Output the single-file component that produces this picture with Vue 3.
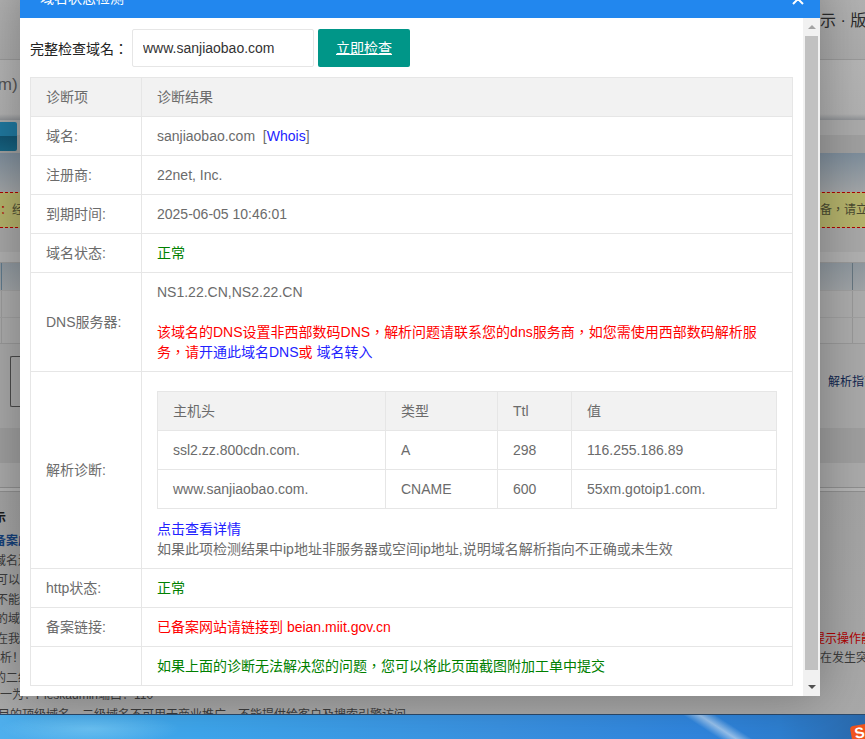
<script setup>
// 背景页面底部的说明文字（被弹窗挡住，只露出两侧）
const noticeRows = [
  { left: '示', cls: 'dark-bold cut', right: '' },
  { left: '备案成功', cls: 'blue-bold cut', right: '' },
  { left: '域名还未', cls: 'cut', right: '' },
  { left: '可以进行', cls: 'trim', right: '' },
  { left: '不能访问', cls: 'trim', right: '' },
  { left: '的域名', cls: 'trim', right: '' },
  { left: '在我司', cls: 'trim', right: '提示操作能', rightCls: 'red-dark cut-more' },
  { left: '析！', cls: '', right: '在发生突' },
  { left: '的二级', cls: 'cut', right: '' }
]

const hostRows = [
  { host: 'ssl2.zz.800cdn.com.', type: 'A', ttl: '298', value: '116.255.186.89' },
  { host: 'www.sanjiaobao.com.', type: 'CNAME', ttl: '600', value: '55xm.gotoip1.com.' }
]
</script>

<template>
  <div class="page">
    <!-- 背景页面 -->
    <div class="band band-top">
      <div></div>
      <div></div>
      <div class="side dark-title">示 · 版权</div>
    </div>
    <div class="band band-nav">
      <div class="side nav-text">tm)</div>
    </div>
    <div class="band band-tabs">
      <div class="tab-btn"></div>
    </div>
    <div class="band band-fade"></div>
    <div class="band band-warn">
      <div class="side warn-text"><span class="red-dark">：</span>经</div>
      <div></div>
      <div class="side warn-text">备<span class="p">，</span>请立即</div>
    </div>
    <div class="band band-gap"></div>
    <div class="band band-thead">
      <div class="edge-line"></div>
      <div></div>
      <div class="cell-line"></div>
    </div>
    <div class="band band-tr">
      <div class="edge-line"></div>
      <div></div>
      <div class="cell-line"></div>
    </div>
    <div class="band band-tr band-tr-last">
      <div class="edge-line"></div>
      <div></div>
      <div class="cell-line"></div>
    </div>
    <div class="band band-box">
      <div class="box-wrap"><div class="box"></div></div>
      <div></div>
      <div class="side guide">解析指南</div>
    </div>
    <div class="band band-shade"></div>
    <div class="band band-light"></div>
    <div class="band band-double"></div>
    <div class="notice">
      <div v-for="row in noticeRows" :key="row.left" class="band notice-row">
        <div class="side" :class="row.cls">{{ row.left }}</div>
        <div></div>
        <div class="side" :class="row.rightCls">{{ row.right }}</div>
      </div>
      <div class="long-row">一为：Pleskadmin端口：110</div>
      <div class="long-row last-line">目的顶级域名，二级域名不可用于商业推广，不能提供给客户及搜索引擎访问</div>
    </div>
    <div class="taskbar">
      <span class="sogou">S</span>
    </div>

    <!-- 弹窗 -->
    <div class="modal">
      <div class="modal-title">
        <span>域名状态检测</span>
        <svg class="close" viewBox="0 0 12 12" width="12" height="12">
          <path d="M1 1L11 11M11 1L1 11" stroke="#fff" stroke-width="2" fill="none" />
        </svg>
      </div>
      <div class="modal-body">
        <div class="content">
          <div class="check-form">
            <label class="form-label">完整检查域名：</label>
            <input class="domain-input" value="www.sanjiaobao.com" readonly />
            <a class="check-btn">立即检查</a>
          </div>
          <table class="diag">
            <colgroup>
              <col class="col-name" />
              <col />
            </colgroup>
            <thead>
              <tr>
                <th>诊断项</th>
                <th>诊断结果</th>
              </tr>
            </thead>
            <tbody>
              <tr>
                <td>域名:</td>
                <td>sanjiaobao.com&nbsp;&nbsp;[<a class="link">Whois</a>]</td>
              </tr>
              <tr>
                <td>注册商:</td>
                <td>22net, Inc.</td>
              </tr>
              <tr>
                <td>到期时间:</td>
                <td>2025-06-05 10:46:01</td>
              </tr>
              <tr>
                <td>域名状态:</td>
                <td class="green">正常</td>
              </tr>
              <tr>
                <td>DNS服务器:</td>
                <td>
                  NS1.22.CN,NS2.22.CN<br /><br />
                  <span class="red">该域名的DNS设置非西部数码DNS<span class="p">，</span>解析问题请联系您的dns服务商<span class="p">，</span>如您需使用西部数码解析服务<span class="p">，</span>请<a class="link">开通此域名DNS</a>或 <a class="link">域名转入</a></span>
                </td>
              </tr>
              <tr>
                <td>解析诊断:</td>
                <td>
                  <table class="hosts">
                    <colgroup>
                      <col class="col-host" />
                      <col class="col-type" />
                      <col class="col-ttl" />
                      <col />
                    </colgroup>
                    <thead>
                      <tr>
                        <th>主机头</th>
                        <th>类型</th>
                        <th>Ttl</th>
                        <th>值</th>
                      </tr>
                    </thead>
                    <tbody>
                      <tr v-for="item in hostRows" :key="item.host">
                        <td>{{ item.host }}</td>
                        <td>{{ item.type }}</td>
                        <td>{{ item.ttl }}</td>
                        <td>{{ item.value }}</td>
                      </tr>
                    </tbody>
                  </table>
                  <a class="link">点击查看详情</a><br />
                  如果此项检测结果中ip地址非服务器或空间ip地址,说明域名解析指向不正确或未生效
                </td>
              </tr>
              <tr>
                <td>http状态:</td>
                <td class="green">正常</td>
              </tr>
              <tr>
                <td>备案链接:</td>
                <td class="red">已备案网站请链接到 beian.miit.gov.cn</td>
              </tr>
              <tr>
                <td></td>
                <td class="green">如果上面的诊断无法解决您的问题<span class="p">，</span>您可以将此页面截图附加工单中提交</td>
              </tr>
            </tbody>
          </table>
        </div>
        <div class="scrollbar">
          <div class="arrow-btn"><i class="arrow-up"></i></div>
          <div class="thumb"></div>
          <div class="arrow-btn arrow-btn-end"><i class="arrow-down"></i></div>
        </div>
      </div>
    </div>
  </div>
</template>

<style scoped>
.page {
  position: relative;
  width: 865px;
  height: 739px;
  overflow: hidden;
  display: flex;
  flex-direction: column;
  background: #adadad;
  font-family: "Liberation Sans", "Noto Sans CJK SC", sans-serif;
  font-size: 12px;
  color: #3c3c3c;
}

.band {
  display: grid;
  grid-template-columns: 20px 800px 45px;
  flex: none;
}

.side {
  overflow: hidden;
  white-space: nowrap;
}

/* 中文逗号、冒号居中的字形 */
.p,
.form-label {
  font-family: "Liberation Sans", "Noto Sans CJK TC", sans-serif;
}

.band-top {
  height: 59px;
  background: linear-gradient(#b2b2b2, #ababab);
}

.dark-title {
  font-size: 16px;
  line-height: 42px;
  color: #2a2a2a;
}

.band-nav {
  height: 61px;
  border-top: 1px solid #9a9a9a;
  box-sizing: border-box;
  background: linear-gradient(#b5b5b5 0, #b1b1b1 90%, #8f9296 100%);
}

.nav-text {
  margin-top: 15px;
  font-size: 17px;
  line-height: 20px;
  color: #555;
  text-indent: -7px;
}

.band-tabs {
  height: 33px;
  background: linear-gradient(#ababab 0, #ababab 45%, #a0a0a0 45%, #a0a0a0 100%);
}

.tab-btn {
  width: 17px;
  height: 29px;
  margin-top: 2px;
  border-radius: 0 2px 2px 0;
  background: linear-gradient(#20789f 0, #20789f 50%, #125573 50%, #176583 100%);
}

.band-fade {
  height: 39px;
  background: linear-gradient(#7e8e9c, #a3a6a8);
}

.band-warn {
  height: 36px;
  box-sizing: border-box;
  border-top: 1px dashed #b00000;
  border-bottom: 1px dashed #b00000;
  background: #b5b36c;
}

.warn-text {
  font-size: 12px;
  line-height: 34px;
  color: #4a4a30;
}

.red-dark {
  color: #b00000;
}

.band-gap {
  height: 34px;
  background: linear-gradient(#a8a8a8 0, #a8a8a8 70%, #b0b0b0 70%, #b0b0b0 100%);
}

.band-thead {
  height: 28px;
  border-top: 1px solid #999;
  box-sizing: border-box;
  background: linear-gradient(#8f989f, #a0a4a7);
}

.band-tr {
  height: 27px;
  border-top: 1px solid #a0a0a0;
  box-sizing: border-box;
  background: #acacac;
}

.band-tr-last {
  height: 27px;
  border-bottom: 1px solid #999;
}

.edge-line {
  width: 1px;
  margin-left: 1px;
  background: #9c9c9c;
}

.cell-line {
  width: 1px;
  margin-left: 32px;
  background: #989898;
}

.band-thead .edge-line {
  background: #5f7a8c;
}

.band-thead .cell-line {
  background: #66757f;
}

.band-box {
  height: 84px;
  background: #a9a9a9;
}

.box-wrap {
  padding: 12px 0 0 10px;
}

.box {
  height: 51px;
  box-sizing: border-box;
  border: 1px solid #4a4a4a;
  border-right: none;
  border-radius: 2px 0 0 2px;
}

.guide {
  padding-left: 8px;
  padding-top: 30px;
  line-height: 16px;
  color: #10264f;
}

.band-shade {
  height: 35px;
  background: #9f9f9f;
}

.band-light {
  height: 24px;
  background: #ababab;
}

.band-double {
  height: 5px;
  box-sizing: border-box;
  border-top: 1px solid #8f8f8f;
  border-bottom: 1px solid #8f8f8f;
  background: #b4b4b4;
}

.notice {
  flex: 1;
  padding-top: 17px;
  overflow: hidden;
  background: linear-gradient(#a4a4a4, #a9a9a9);
}

.notice-row {
  height: 19.5px;
  line-height: 19.5px;
}

.notice-row:first-child {
  height: 23px;
}

.cut {
  text-indent: -6px;
}

.trim {
  text-indent: -4px;
}

.cut-more {
  text-indent: -7px;
}

.dark-bold {
  font-weight: bold;
  color: #1a1a1a;
}

.blue-bold {
  font-weight: bold;
  color: #14407a;
}

.long-row {
  height: 19.5px;
  line-height: 19.5px;
  white-space: nowrap;
  margin-top: -2px;
}

.last-line {
  margin-top: 0;
  text-indent: -2px;
}

.taskbar {
  flex: none;
  height: 25px;
  display: flex;
  justify-content: flex-end;
  align-items: flex-end;
  overflow: hidden;
  box-sizing: border-box;
  border-top: 1px solid #2c4a6c;
  background:
    linear-gradient(33deg, transparent 0, transparent 392px, rgba(255, 255, 255, 0.5) 401px, transparent 410px),
    radial-gradient(ellipse 90px 16px at 90px 14px, rgba(130, 210, 250, 0.6), transparent),
    linear-gradient(90deg, #4fb0ee 0, #3ea7ee 200px, #3a92e2 500px, #3086df 700px, #2e80d2 780px, #2a68aa 865px);
}

.sogou {
  width: 17px;
  height: 16px;
  margin-right: -3px;
  margin-bottom: -2px;
  border-radius: 3px;
  background: #f0541e;
  color: #fff;
  font-size: 15px;
  font-weight: bold;
  line-height: 16px;
  text-align: center;
  transform: rotate(-10deg);
}

.modal {
  position: absolute;
  left: 20px;
  top: -24px;
  width: 800px;
  height: 720px;
  display: flex;
  flex-direction: column;
  background: #fff;
  box-shadow: 1px 1px 50px rgba(0, 0, 0, 0.3);
}

.modal-title {
  flex: none;
  height: 42px;
  display: flex;
  justify-content: space-between;
  align-items: center;
  padding: 0 16px 0 20px;
  background: #2287ee;
  color: #fff;
  font-size: 14px;
}

.close {
  margin-top: 4px;
}

.modal-body {
  flex: 1;
  min-height: 0;
  display: flex;
}

.content {
  flex: 1;
  min-width: 0;
  padding: 11px 0 0 10px;
  font-size: 14px;
  color: #6b6b6b;
}

.check-form {
  display: flex;
  align-items: center;
  height: 38px;
  margin-bottom: 10px;
  gap: 4px;
  color: #222;
}

.domain-input {
  width: 182px;
  height: 38px;
  box-sizing: border-box;
  padding: 0 10px;
  border: 1px solid #e6e6e6;
  border-radius: 2px;
  outline: none;
  font: inherit;
  color: #333;
}

.check-btn {
  width: 92px;
  height: 38px;
  border-radius: 2px;
  background: #009688;
  color: #fff;
  line-height: 38px;
  text-align: center;
  text-decoration: underline;
}

table {
  border-collapse: collapse;
  table-layout: fixed;
}

th,
td {
  padding: 9px 15px;
  border: 1px solid #e6e6e6;
  line-height: 20px;
  font-weight: normal;
  text-align: left;
}

.diag {
  width: 763px;
}

.col-name {
  width: 111px;
}

thead tr {
  background: #f2f2f2;
}

.hosts {
  width: 620px;
  margin: 10px 0;
}

.col-host {
  width: 228px;
}

.col-type {
  width: 112px;
}

.col-ttl {
  width: 74px;
}

.link {
  color: #2222ff;
}

.red {
  color: #f00;
}

.green {
  color: #008000;
}

.scrollbar {
  flex: none;
  width: 17px;
  display: flex;
  flex-direction: column;
  background: #f1f1f1;
}

.arrow-btn {
  flex: none;
  height: 18px;
  display: flex;
  align-items: center;
  justify-content: center;
}

.arrow-btn-end {
  height: 26px;
  padding-top: 8px;
  box-sizing: border-box;
}

.arrow-up {
  border: 4px solid transparent;
  border-top: none;
  border-bottom: 4px solid #a3a3a3;
}

.arrow-down {
  border: 4px solid transparent;
  border-bottom: none;
  border-top: 4px solid #505050;
}

.thumb {
  flex: 1;
  margin: 0 2px;
  background: #c1c1c1;
}
</style>

<style>
html,
body {
  margin: 0;
  overflow: hidden;
}
</style>
